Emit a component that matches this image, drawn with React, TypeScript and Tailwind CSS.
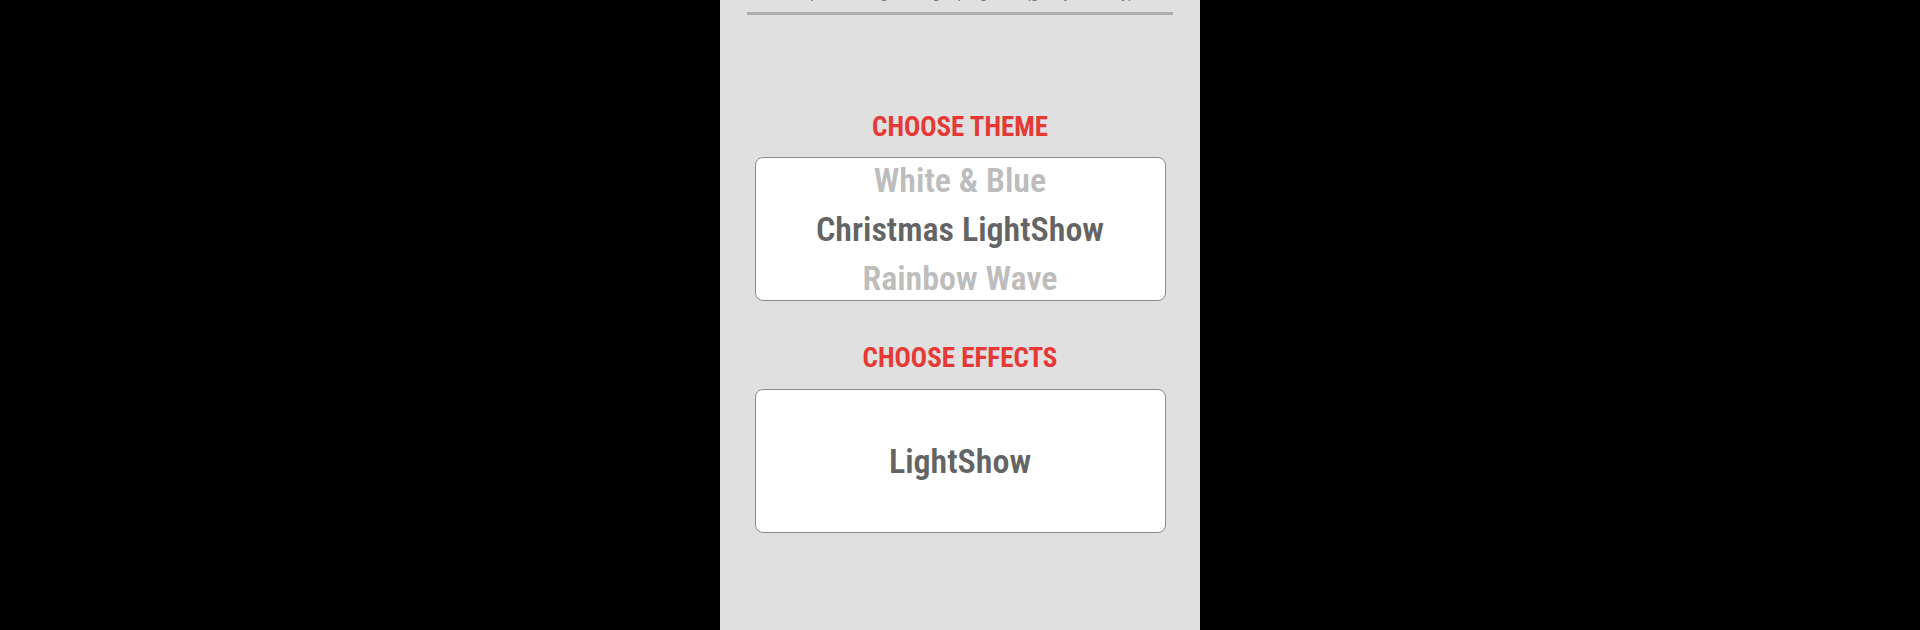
export default function App() {
  const themes = [
    { name: 'White & Blue', active: false },
    { name: 'Christmas LightShow', active: true },
    { name: 'Rainbow Wave', active: false },
  ];

  return (
    <div className="w-[1920px] h-[630px] bg-black flex justify-center overflow-hidden" style={{ fontFamily: 'Roboto, "Noto Sans", sans-serif' }}>
      <div className="w-[480px] h-full bg-[#e0e0e0] flex flex-col items-center">
        {/* clipped hint text above the divider */}
        <div className="w-[426px] h-[12px] overflow-hidden relative">
          <p className="absolute bottom-[10px] left-0 right-0 text-center text-[15px] leading-[18px] text-[#757575] whitespace-nowrap">
            Swipe to change the light programs (gently, steadily)
          </p>
        </div>
        <div className="w-[426px] h-[3px] bg-[#aeaeae]" />

        <h2 className="mt-[96px] text-[27px] leading-[32px] font-bold font-stretch-[80%] text-[#e53935]">CHOOSE THEME</h2>
        <div className="mt-[14px] w-[411px] h-[144px] bg-white border border-[#8c8c8c] rounded-[8px] flex flex-col items-center justify-center overflow-hidden">
          {themes.map((t) => (
            <div
              key={t.name}
              className={`text-[34px] leading-[49px] font-semibold font-stretch-[80%] ${t.active ? 'text-[#646464]' : 'text-[#bdbdbd]'}`}
            >
              {t.name}
            </div>
          ))}
        </div>

        <h2 className="mt-[41px] text-[27px] leading-[32px] font-bold font-stretch-[80%] text-[#e53935]">CHOOSE EFFECTS</h2>
        <div className="mt-[15px] w-[411px] h-[144px] bg-white border border-[#8c8c8c] rounded-[8px] flex items-center justify-center">
          <div className="text-[34px] leading-[49px] font-semibold font-stretch-[80%] text-[#646464]">LightShow</div>
        </div>
      </div>
    </div>
  );
}
